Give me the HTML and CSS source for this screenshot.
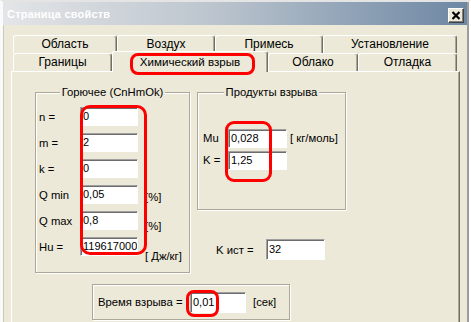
FILE: index.html
```html
<!DOCTYPE html>
<html>
<head>
<meta charset="utf-8">
<link rel="stylesheet" href="styles.css">
</head>
<body>
<div class="window">
  <div class="titlebar">
    <span class="title">Страница свойств</span>
    <div class="close">
      <svg width="10" height="9" viewBox="0 0 10 9"><path d="M1.5 1 L8.5 8 M8.5 1 L1.5 8" stroke="#000" stroke-width="2.2" fill="none"/></svg>
    </div>
  </div>
  <div class="tabs">
    <div class="tabrow">
      <div class="tab t-obl">Область</div>
      <div class="tab t-vozd">Воздух</div>
      <div class="tab t-prim">Примесь</div>
      <div class="tab t-ust">Установление</div>
    </div>
    <div class="tabrow front">
      <div class="tab t-gran">Границы</div>
      <div class="tab sel t-him">Химический взрыв</div>
      <div class="tab t-obla">Облако</div>
      <div class="tab t-otl">Отладка</div>
    </div>
  </div>
  <div class="panel">
    <div class="top">
      <div class="group g1">
        <span class="legend">Горючее (CnHmOk)</span>
        <div class="rows1">
          <span class="lbl">n =</span><div class="field">0</div><span></span>
          <span class="lbl">m =</span><div class="field">2</div><span></span>
          <span class="lbl">k =</span><div class="field">0</div><span></span>
          <span class="lbl">Q min</span><div class="field">0,05</div><span class="unit u1">[%]</span>
          <span class="lbl">Q max</span><div class="field">0,8</div><span class="unit u2">[%]</span>
          <span class="lbl">Hu =</span><div class="field">119617000</div><span class="unit u3">[ Дж/кг]</span>
        </div>
      </div>
      <div class="rightcol">
        <div class="group g2">
          <span class="legend">Продукты взрыва</span>
          <div class="rows2">
            <span class="lbl">Mu</span><div class="field">0,028</div><span class="unit">[ кг/моль]</span>
            <span class="lbl">K =</span><div class="field">1,25</div><span></span>
          </div>
        </div>
        <div class="kist">
          <span class="lbl kl">K ист =</span><div class="field fk">32</div>
        </div>
      </div>
    </div>
    <div class="group g3">
      <span class="lbl tl">Время взрыва =</span><div class="field ft">0,01</div><span class="unit us">[сек]</span>
    </div>
  </div>
  <div class="mark m1"></div>
  <div class="mark m2"></div>
  <div class="mark m3"></div>
  <div class="mark m4"></div>
</div>
</body>
</html>
```
FILE: styles.css
```css
* { box-sizing: border-box; }
body {
  margin: 0;
  background: #fff;
  font-family: "Liberation Sans", Arial, sans-serif;
  font-size: 12px;
  color: #000;
}
.window {
  position: relative;
  width: 471px;
  height: 322px;
  overflow: hidden;
  background: #ece9d8;
  border-top: 2px solid #e4e4e4;
  border-left: 3px solid #fafafa;
  border-right: 2px solid #fff;
  box-shadow: inset 1px 0 0 #cbc8bc, inset -2px 0 0 #9c9c9c;
}
.titlebar {
  height: 23px;
  display: flex;
  align-items: center;
  justify-content: space-between;
  background: linear-gradient(to right, #e3e5e7 0%, #bcc5ce 45%, #6d87a3 100%);
  padding-left: 4px;
  margin-right: 2px;
}
.title {
  color: #fff;
  font-weight: bold;
  font-size: 11px;
  letter-spacing: 0.2px;
}
.close {
  width: 16px;
  height: 15px;
  margin-right: 3px;
  margin-top: 3px;
  background: #ece9d8;
  border-top: 1px solid #fff;
  border-left: 1px solid #fff;
  border-right: 1px solid #404040;
  border-bottom: 1px solid #404040;
  box-shadow: inset -1px -1px 0 #808080;
  display: flex;
  align-items: center;
  justify-content: center;
}
.close svg { display: block; }
.tabs {
  margin-top: 10px;
  margin-left: 10px;
  width: 444px;
}
.tabrow {
  display: flex;
  align-items: flex-start;
  height: 18px;
}
.tab {
  height: 18px;
  background: #ece9d8;
  border-top: 1px solid #fff;
  border-left: 1px solid #fff;
  border-right: 1px solid #716f64;
  box-shadow: inset -1px 0 0 #aca899;
  border-radius: 3px 3px 0 0;
  display: flex;
  align-items: center;
  justify-content: center;
  padding-bottom: 1px;
}
.t-obl { width: 104px; }
.t-vozd { width: 98px; }
.t-prim { width: 108px; }
.t-ust { width: 134px; }
.t-gran { width: 99px; }
.t-him { width: 156px; font-size: 11.6px; }
.t-obla { width: 90px; }
.t-otl { width: 99px; }
.tab.sel {
  height: 21px;
  margin-top: -2px;
  position: relative;
  z-index: 1;
  padding-bottom: 2px;
}
.panel {
  margin-left: 8px;
  width: 449px;
  height: 260px;
  border-top: 1px solid #fff;
  border-left: 1px solid #fff;
  border-right: 1px solid #716f64;
  box-shadow: inset -1px 0 0 #aca899;
  padding-top: 20px;
  padding-left: 23px;
  font-size: 11.3px;
}
.top {
  display: flex;
  align-items: flex-start;
}
.group {
  border: 1px solid #aca899;
  box-shadow: inset 1px 1px 0 #fff, 1px 1px 0 #fff;
}
.legend {
  display: block;
  width: max-content;
  margin: -8px auto 0;
  padding: 0 2px;
  background: #ece9d8;
  line-height: 14px;
}
.g1 {
  width: 155px;
  height: 181px;
}
.rows1 {
  display: grid;
  grid-template-columns: 41px 58px auto;
  grid-auto-rows: 19px;
  row-gap: 7px;
  margin-top: 8px;
  padding-left: 3px;
  align-items: center;
}
.lbl { line-height: 14px; white-space: nowrap; }
.field {
  height: 19px;
  background: #fff;
  border-top: 1px solid #a0a0a0;
  border-left: 1px solid #a0a0a0;
  border-right: 1px solid #fff;
  border-bottom: 1px solid #fff;
  box-shadow: inset 1px 1px 0 #6c6c6c;
  padding-left: 2px;
  font-size: 11px;
  line-height: 17px;
  white-space: nowrap;
  overflow: hidden;
}
.unit { line-height: 14px; white-space: nowrap; margin-left: 7px; align-self: start; }
.u1 { margin-top: 5px; }
.u2 { margin-top: 8px; }
.u3 { margin-top: 12px; }
.rightcol {
  margin-left: 7px;
  display: flex;
  flex-direction: column;
}
.g2 {
  width: 149px;
  height: 118px;
}
.rows2 {
  display: grid;
  grid-template-columns: 25px 59px auto;
  grid-auto-rows: 20px;
  row-gap: 2px;
  margin-top: 29px;
  padding-left: 5px;
  align-items: center;
}
.rows2 .unit { margin-left: 3px; align-self: center; }
.kist {
  margin-top: 29px;
  margin-left: 19px;
  display: flex;
  align-items: center;
}
.kl { width: 50px; }
.fk { width: 59px; height: 21px; line-height: 19px; }
.g3 {
  margin-top: 11px;
  margin-left: 57px;
  width: 198px;
  height: 36px;
  display: flex;
  align-items: center;
  padding-left: 5px;
}
.tl { width: 92px; }
.ft { width: 56px; height: 21px; line-height: 19px; }
.us { margin-left: 7px; align-self: center; }
.mark {
  position: absolute;
  border: 3px solid #f00;
  z-index: 5;
}
.m1 { left: 127px; top: 51px; width: 125px; height: 22px; border-radius: 8px; }
.m2 { left: 77px; top: 103px; width: 67px; height: 150px; border-radius: 10px; }
.m3 { left: 222px; top: 119px; width: 47px; height: 61px; border-radius: 9px; }
.m4 { left: 183px; top: 288px; width: 33px; height: 27px; border-radius: 8px; }
```
